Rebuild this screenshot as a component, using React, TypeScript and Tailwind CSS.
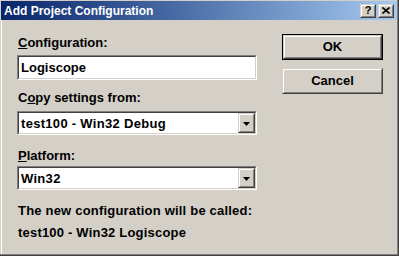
import React from "react";

const font = { fontFamily: '"Liberation Sans", Arial, sans-serif' };

function Sunken({ children, className = "" }: { children: React.ReactNode; className?: string }) {
  return (
    <div className={"border border-t-[#808080] border-l-[#808080] border-b-white border-r-white " + className}>
      <div className="border border-t-[#404040] border-l-[#404040] border-b-[#d4d0c8] border-r-[#d4d0c8] bg-white h-full flex items-center">
        {children}
      </div>
    </div>
  );
}

function Raised({ children, className = "" }: { children?: React.ReactNode; className?: string }) {
  return (
    <div className={"border border-t-[#d4d0c8] border-l-[#d4d0c8] border-b-[#404040] border-r-[#404040] bg-[#d4d0c8] " + className}>
      <div className="border border-t-white border-l-white border-b-[#808080] border-r-[#808080] h-full w-full flex items-center justify-center">
        {children}
      </div>
    </div>
  );
}

function Combo({ value }: { value: string }) {
  return (
    <Sunken className="h-[24px] w-[240px]">
      <span className="pl-[2px] flex-1 text-[13px] font-bold text-black leading-none tracking-[0.3px]">{value}</span>
      <Raised className="h-[20px] w-[17px]">
        <svg width="7" height="4" viewBox="0 0 7 4" className="mt-[2px]">
          <path d="M0 0h7L3.5 4z" fill="#000" />
        </svg>
      </Raised>
    </Sunken>
  );
}

export default function App() {
  return (
    <div
      className="w-[399px] h-[256px] bg-[#d4d0c8] flex flex-col p-[1px] shadow-[inset_-1px_-1px_#404040,inset_-2px_-2px_#808080,inset_1px_1px_#d4d0c8,inset_2px_2px_#ffffff]"
      style={font}
    >
      <div className="h-[19px] flex items-center bg-gradient-to-r from-[#0a246a] to-[#a6caf0] pl-[3px] pr-[3px] mr-[1px]">
        <span className="text-white font-bold text-[12px] leading-none flex-1">Add Project Configuration</span>
        <Raised className="w-[16px] h-[14px]">
          <span className="text-black font-bold text-[11px] leading-none">?</span>
        </Raised>
        <Raised className="w-[16px] h-[14px] ml-[2px]">
          <svg width="8" height="7" viewBox="0 0 8 7">
            <path d="M0.5 0.5L7.5 6.5M7.5 0.5L0.5 6.5" stroke="#000" strokeWidth="1.6" />
          </svg>
        </Raised>
      </div>
      <div className="flex flex-1 text-black font-bold text-[13px]">
        <div className="pl-[16px] pt-[15px] flex flex-col">
          <div className="leading-[16px] pl-[1px]"><span className="underline">C</span>onfiguration:</div>
          <Sunken className="mt-[4px] h-[25px] w-[240px]">
            <span className="pl-[2px] leading-none">Logiscope</span>
          </Sunken>
          <div className="leading-[16px] pl-[1px] mt-[10px]">C<span className="underline">o</span>py settings from:</div>
          <div className="mt-[5px]"><Combo value="test100 - Win32 Debug" /></div>
          <div className="leading-[16px] pl-[1px] mt-[13px]"><span className="underline">P</span>latform:</div>
          <div className="mt-[2px]"><Combo value="Win32" /></div>
          <div className="leading-[16px] pl-[1px] mt-[13px] tracking-[0.2px]">The new configuration will be called:</div>
          <div className="leading-[16px] pl-[1px] mt-[6px] tracking-[0.2px]">test100 - Win32 Logiscope</div>
        </div>
        <div className="ml-[25px] pt-[14px] flex flex-col">
          <div className="border border-black w-[101px] h-[26px]">
            <Raised className="w-full h-full">OK</Raised>
          </div>
          <Raised className="w-[101px] h-[26px] mt-[8px]">Cancel</Raised>
        </div>
      </div>
    </div>
  );
}
